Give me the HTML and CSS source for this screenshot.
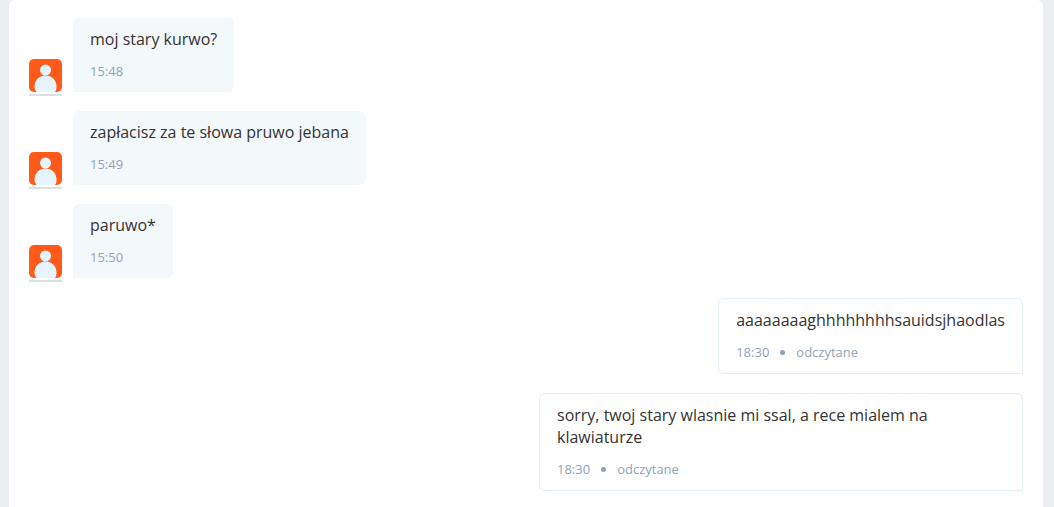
FILE: index.html
```html
<!DOCTYPE html>
<html lang="pl">
<head>
    <meta charset="UTF-8">
    <meta name="viewport" content="width=device-width, initial-scale=1.0">
    <title>Wiadomości</title>
    <link rel="stylesheet" href="styles.css">
</head>
<body>
    <svg class="symbols" width="0" height="0">
        <symbol id="avatar" viewBox="0 0 33 37">
            <rect y="35" width="33" height="2" fill="#dedede"/>
            <rect width="33" height="33" rx="5" fill="#ff5a19"/>
            <circle cx="16.5" cy="11" r="5.5" fill="#e6f5fd"/>
            <path d="M7.500 33C6.500 31.800 5.500 30 5.500 27.500C5.500 21 10.500 16.500 16.500 16.500S27.500 21 27.500 27.500C27.500 30 27 31.800 26 33Z" fill="#e6f5fd"/>
        </symbol>
    </svg>

    <main class="chat">
        <section class="group">
            <div class="message">
                <svg class="avatar"><use href="#avatar"/></svg>
                <div class="bubble">
                    <p class="text">moj stary kurwo?</p>
                    <div class="meta"><time>15:48</time></div>
                </div>
            </div>

            <div class="message">
                <svg class="avatar"><use href="#avatar"/></svg>
                <div class="bubble">
                    <p class="text">zapłacisz za te słowa pruwo jebana</p>
                    <div class="meta"><time>15:49</time></div>
                </div>
            </div>

            <div class="message">
                <svg class="avatar"><use href="#avatar"/></svg>
                <div class="bubble">
                    <p class="text">paruwo*</p>
                    <div class="meta"><time>15:50</time></div>
                </div>
            </div>
        </section>

        <section class="group">
            <div class="message own">
                <div class="bubble">
                    <p class="text">aaaaaaaaghhhhhhhhsauidsjhaodlas</p>
                    <div class="meta"><time>18:30</time><span class="dot"></span><span>odczytane</span></div>
                </div>
            </div>

            <div class="message own">
                <div class="bubble">
                    <p class="text">sorry, twoj stary wlasnie mi ssal, a rece mialem na klawiaturze</p>
                    <div class="meta"><time>18:30</time><span class="dot"></span><span>odczytane</span></div>
                </div>
            </div>
        </section>
    </main>
</body>
</html>
```
FILE: styles.css
```css
* {
    box-sizing: border-box;
}

body {
    margin: 0;
    padding: 0 11px 0 9px;
    background-color: #ebeff0;
    font-family: "Open Sans", sans-serif;
}

.symbols {
    position: absolute;
}

.chat {
    display: flex;
    flex-direction: column;
    gap: 20px;
    min-height: 100vh;
    padding: 18px 20px 16px;
    background-color: #fff;
    border-radius: 6px 6px 0 0;
}

.group {
    display: flex;
    flex-direction: column;
    gap: 19px;
}

.message {
    display: flex;
    align-items: flex-end;
    gap: 11px;
}

.avatar {
    flex: none;
    width: 33px;
    height: 37px;
    margin-bottom: -4px;
}

.bubble {
    max-width: 484px;
    padding: 10px 17px 11px;
    background-color: #f3f8fb;
    border-radius: 6px 6px 6px 0;
}

.text {
    margin: 0 0 11px;
    color: #333;
    font-size: 16px;
    line-height: 22px;
}

.meta {
    display: flex;
    align-items: center;
    gap: 11px;
    color: #91a4b7;
    font-size: 13px;
    line-height: 20px;
}

.dot {
    width: 5px;
    height: 5px;
    background-color: #91a4b7;
    border-radius: 50%;
}

.own {
    justify-content: flex-end;
}

.own .bubble {
    background-color: #fff;
    border: 1px solid #e2f0f8;
    border-radius: 6px 6px 0 6px;
}
```
